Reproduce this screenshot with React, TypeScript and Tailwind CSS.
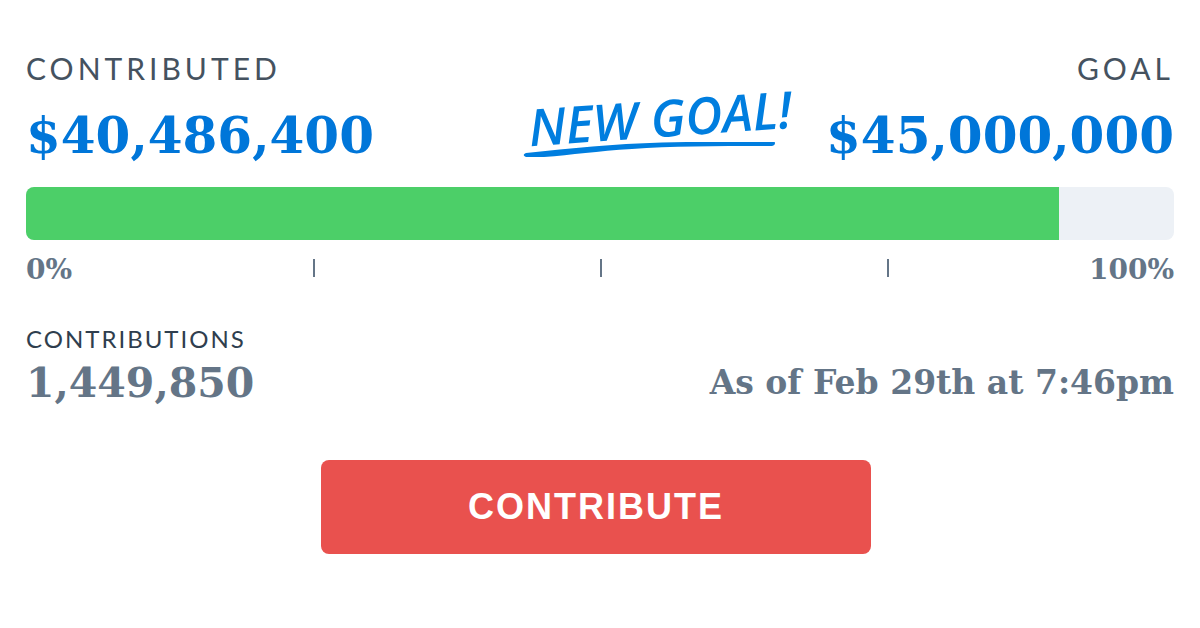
import React from 'react';

const stats = {
  contributed: 40486400,
  goal: 45000000,
  contributions: 1449850,
  updated: 'As of Feb 29th at 7:46pm',
};

const format = (n: number) => n.toLocaleString('en-US');

const Label: React.FC<{ children: React.ReactNode }> = ({ children }) => (
  <div className="font-['Lato',sans-serif] font-normal text-[30px] leading-9 tracking-[4px] text-[#45525f] uppercase">
    {children}
  </div>
);

const Amount: React.FC<{ value: number }> = ({ value }) => (
  <div className="text-[50px] leading-[60px] text-[#0076d9]">${format(value)}</div>
);

const NewGoal = () => (
  <div className="w-[276px] pb-1 text-[#007edf]">
    <div className="-rotate-4 flex justify-center whitespace-nowrap font-['Open_Sans',sans-serif] italic font-semibold text-[51px] leading-[50px]">
      NEW GOAL!
    </div>
    <svg viewBox="0 0 276 20" className="block w-full h-5" fill="currentColor" aria-hidden="true">
      <path d="M4 11C50 6 90 2 140 0.500C180 -0.500 220 -0.500 250 -1C254 -1 254 3 250 4C200 4 150 4 110 7C75 9 50 13 22 15C15 15 9 15 4 15C1 14 1 12 4 11Z" />
    </svg>
  </div>
);

const ProgressBar = () => {
  const percent = (stats.contributed / stats.goal) * 100;
  return (
    <div
      role="progressbar"
      aria-label="Contributed"
      aria-valuenow={Math.round(percent)}
      className="mt-[21px] h-[53px] rounded-lg overflow-hidden bg-[#edf1f6]"
    >
      <div className="h-full bg-[#4ccf68]" style={{ width: `${percent}%` }} />
    </div>
  );
};

// 0% and 100% at the ends, tick marks at every quarter
const Scale = () => (
  <div className="mt-3 grid grid-cols-4 text-[28px] leading-9">
    <span>0%</span>
    {[25, 50].map((q) => (
      <span key={q} className="mt-[7px] h-[18px] border-l-2 border-[#647587]" />
    ))}
    <span className="flex justify-between">
      <span className="mt-[7px] h-[18px] border-l-2 border-[#647587]" />
      <span>100%</span>
    </span>
  </div>
);

export default function App() {
  return (
    <main className="min-h-screen bg-white px-[26px] pt-[50px] pb-16 font-['DejaVu_Serif',serif] font-bold text-[#647587]">
      <div className="flex justify-between">
        <Label>Contributed</Label>
        <Label>Goal</Label>
      </div>
      <div className="mt-[6px] flex items-end justify-between">
        <Amount value={stats.contributed} />
        <div className="flex items-end gap-7">
          <NewGoal />
          <Amount value={stats.goal} />
        </div>
      </div>

      <ProgressBar />
      <Scale />

      <div className="mt-[37px] flex items-end justify-between">
        <div>
          <div className="font-['Lato',sans-serif] font-normal text-[24px] leading-7 tracking-[2px] text-[#2f3e4e] uppercase">
            Contributions
          </div>
          <div className="text-[41px] leading-[60px]">{format(stats.contributions)}</div>
        </div>
        <div className="text-[33px] leading-[60px]">{stats.updated}</div>
      </div>

      <div className="mt-[47px] pr-2 flex justify-center">
        <button
          type="button"
          className="w-[550px] h-[94px] rounded-lg bg-[#e9514e] font-['Liberation_Sans',sans-serif] font-bold text-[36px] tracking-[2px] text-white"
        >
          CONTRIBUTE
        </button>
      </div>
    </main>
  );
}
